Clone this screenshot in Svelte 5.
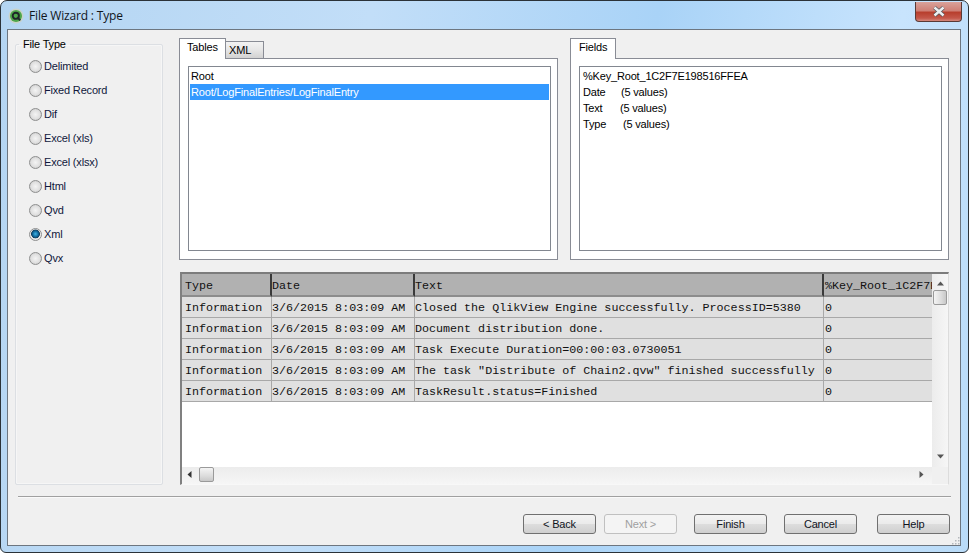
<script>
  const types = ['Delimited','Fixed Record','Dif','Excel (xls)','Excel (xlsx)','Html','Qvd','Xml','Qvx'];
  const rows = [
    'Closed the QlikView Engine successfully. ProcessID=5380',
    'Document distribution done.',
    'Task Execute Duration=00:00:03.0730051',
    'The task "Distribute of Chain2.qvw" finished successfully',
    'TaskResult.status=Finished'
  ];
  const buttons = [
    { label: '< Back', cls: '' },
    { label: 'Next >', cls: 'off' },
    { label: 'Finish', cls: 'g1' },
    { label: 'Cancel', cls: 'g2' },
    { label: 'Help', cls: 'g3' }
  ];
</script>

<div class="window">
  <header class="titlebar">
    <svg class="logo" width="16" height="16" viewBox="0 0 16 16">
      <circle cx="8" cy="8" r="7.5" fill="#c9d2c9"/>
      <circle cx="8" cy="8" r="6" fill="#4fa64a"/>
      <circle cx="7.8" cy="7.8" r="3.1" fill="none" stroke="#20262a" stroke-width="1.9"/>
      <path d="M9.5 9.5 L12.3 12.3" stroke="#20262a" stroke-width="1.9"/>
    </svg>
    <span class="title">File Wizard : Type</span>
    <button class="close" aria-label="Close">
      <svg width="14" height="11" viewBox="0 0 14 11">
        <path d="M2.5 1.5 L11.5 9.5 M11.5 1.5 L2.5 9.5" stroke="#50565c" stroke-width="3.8"/>
        <path d="M2.5 1.5 L11.5 9.5 M11.5 1.5 L2.5 9.5" stroke="#eceff1" stroke-width="2.4"/>
      </svg>
    </button>
  </header>

  <div class="client">
    <div class="main">
      <fieldset class="group">
        <legend>File Type</legend>
        {#each types as t}
          <label class="radio">
            <span class="dot" class:on={t === 'Xml'}></span>
            <span>{t}</span>
          </label>
        {/each}
      </fieldset>

      <div class="right">
        <div class="panes">
          <section class="pane">
            <div class="tabs">
              <span class="tab active">Tables</span>
              <span class="tab back">XML</span>
            </div>
            <div class="tabpanel">
              <div class="list">
                <div class="item">Root</div>
                <div class="item sel">Root/LogFinalEntries/LogFinalEntry</div>
              </div>
            </div>
          </section>
          <section class="pane">
            <div class="tabs">
              <span class="tab active fields">Fields</span>
            </div>
            <div class="tabpanel">
              <div class="list fieldlist">
                <div class="item">%Key_Root_1C2F7E198516FFEA</div>
                <div class="item"><span class="fname date">Date</span>(5 values)</div>
                <div class="item"><span class="fname">Text</span>(5 values)</div>
                <div class="item"><span class="fname wide">Type</span>(5 values)</div>
              </div>
            </div>
          </section>
        </div>

        <div class="grid">
          <div class="data">
            <div class="row head">
              <div class="cell">Type</div>
              <div class="cell">Date</div>
              <div class="cell">Text</div>
              <div class="cell">%Key_Root_1C2F7E198516FFEA</div>
            </div>
            {#each rows as r}
              <div class="row">
                <div class="cell">Information</div>
                <div class="cell">3/6/2015 8:03:09 AM</div>
                <div class="cell">{r}</div>
                <div class="cell">0</div>
              </div>
            {/each}
          </div>
          <div class="vbar">
            <svg class="arrow" width="9" height="5" viewBox="0 0 9 5"><path d="M4.5 0.5 L8 4.5 H1 Z" fill="#555"/></svg>
            <div class="vthumb"></div>
            <svg class="arrow down" width="9" height="5" viewBox="0 0 9 5"><path d="M4.5 4.5 L8 0.5 H1 Z" fill="#555"/></svg>
          </div>
          <div class="hbar">
            <svg class="harrow" width="5" height="9" viewBox="0 0 5 9"><path d="M0.5 4.5 L4.5 1 V8 Z" fill="#333"/></svg>
            <div class="hthumb"></div>
            <svg class="harrow end" width="5" height="9" viewBox="0 0 5 9"><path d="M4.5 4.5 L0.5 1 V8 Z" fill="#555"/></svg>
          </div>
          <div class="corner"></div>
        </div>
      </div>
    </div>

    <footer class="footer">
      <hr class="sep" />
      <div class="buttons">
        {#each buttons as b}
          <button class="btn {b.cls}">{b.label}</button>
        {/each}
      </div>
    </footer>
    <svg class="grip" width="8" height="8" viewBox="0 0 8 8">
      <path d="M6 0h1.5v1.5H6zM3 3h1.5v1.5H3zM6 3h1.5v1.5H6zM0 6h1.5v1.5H0zM3 6h1.5v1.5H3zM6 6h1.5v1.5H6z" fill="#b4b8bc"/>
    </svg>
  </div>
</div>

<style>
  :global(body) { margin: 0; background: #fff; }
  * { box-sizing: border-box; }

  .window {
    width: 969px;
    height: 553px;
    display: flex;
    flex-direction: column;
    padding: 0 7px 7px 6px;
    border: 1px solid #2b3238;
    border-radius: 7px 7px 6px 6px;
    background: linear-gradient(100deg, #b4d5f2 0%, #c2def8 35%, #a9d3f7 62%, #c8e4fd 85%, #b9dbf8 100%);
    font: 11px/16px "Liberation Sans", Arial, sans-serif;
    letter-spacing: -0.18px;
    color: #000;
    overflow: hidden;
  }

  .titlebar {
    flex: none;
    height: 28px;
    display: flex;
    align-items: center;
    gap: 5px;
    padding-left: 1px;
    padding-top: 1px;
  }
  .title { font: 12px "Open Sans", sans-serif; letter-spacing: -0.17px; color: #10161c; }
  .close {
    margin-left: auto;
    margin-right: -1px;
    align-self: flex-start;
    width: 47px;
    height: 20px;
    padding: 0;
    display: flex;
    align-items: center;
    justify-content: center;
    border: 1px solid #5a3a36;
    border-top: none;
    border-radius: 0 0 4px 4px;
    background: linear-gradient(#d9a29a 0%, #cf8076 45%, #b83f2e 55%, #c4574a 85%, #d58a7e 100%);
  }

  .client {
    position: relative;
    flex: 1;
    display: flex;
    flex-direction: column;
    border: 1px solid #6d7680;
    background: #f0f0f0;
    padding: 8px 11px 11px 7px;
  }

  .main { flex: none; display: flex; gap: 16px; height: 447px; }

  .group {
    flex: none;
    width: 148px;
    height: 447px;
    margin: 0;
    padding: 0 0 0 13px;
    border: 1px solid #dcdfe3;
    border-radius: 2px;
    box-shadow: inset 0 0 0 1px #f6f6f6;
  }
  legend {
    margin-left: -10px;
    padding: 0 4px;
    line-height: 12px;
  }
  .radio {
    display: flex;
    align-items: center;
    gap: 1px;
    height: 24px;
    color: #10183c;
  }
  .radio:first-of-type { margin-top: 4px; }
  .dot {
    width: 13px;
    height: 13px;
    border-radius: 50%;
    border: 1px solid #8e8f8f;
    background: radial-gradient(circle at 50% 50%, #f4f4f4 0%, #e0e0e0 55%, #d0d0d0 75%, #f2f2f2 100%);
    margin-right: 1px;
  }
  .dot.on {
    background: radial-gradient(circle at 50% 45%, #3fb4e6 0%, #0b5f92 38%, #17405c 50%, #e8e8e8 58%, #f4f4f4 100%);
  }

  .right { flex: none; width: 770px; display: flex; flex-direction: column; gap: 12px; }
  .panes { display: flex; gap: 12px; height: 222px; }
  .pane { width: 379px; display: flex; flex-direction: column; }

  .tabs { flex: none; height: 20px; display: flex; align-items: flex-end; position: relative; z-index: 1; }
  .tab {
    border: 1px solid #898c95;
    padding-left: 7px;
    line-height: 16px;
  }
  .tab.active {
    width: 47px;
    height: 21px;
    margin-bottom: -1px;
    background: #fff;
    border-bottom: none;
  }
  .tab.fields { width: 46px; padding-left: 8px; }
  .tab.back {
    width: 38px;
    height: 17px;
    padding-left: 3px;
    border-left: none;
    border-bottom: none;
    background: linear-gradient(#f2f2f2, #e6e6e6 50%, #d2d2d2);
    line-height: 17px;
  }

  .tabpanel {
    flex: 1;
    background: #fff;
    border: 1px solid #898c95;
    padding: 7px 6px 8px 8px;
  }
  .list {
    height: 100%;
    border: 1px solid #828790;
    background: #fff;
    padding: 1px;
  }
  .item { height: 16px; padding-left: 1px; }
  .item.sel { background: #3399ff; color: #fff; }
  .fieldlist .item { padding-left: 2px; }
  .fname { display: inline-block; width: 37px; }
  .fname.date { width: 38px; }
  .fname.wide { width: 40px; }

  .grid {
    height: 213px;
    margin-left: 1px;
    display: grid;
    grid-template-columns: 1fr 16px;
    grid-template-rows: 1fr 17px;
    border-top: 2px solid #7c7c7c;
    border-left: 2px solid #808080;
    border-bottom: 1px solid #f8f8f8;
    border-right: 1px solid #dcdcdc;
    background: #fff;
  }
  .data {
    overflow: hidden;
    min-width: 0;
    font: 11.7px/20px "Liberation Mono", "Courier New", monospace;
    letter-spacing: 0;
  }
  .row {
    display: grid;
    grid-template-columns: 90px 143px 409px 110px;
    height: 21px;
    background: #e0e0e0;
    color: #111;
  }
  .cell {
    border-right: 1px solid #a8a8a8;
    border-bottom: 1px solid #a8a8a8;
    white-space: nowrap;
    overflow: hidden;
    line-height: 23px;
  }
  .cell:first-child { padding-left: 3px; }
  .cell:last-child { border-right: none; padding-left: 1px; }
  .head { height: 23px; background: #b1b1b1; }
  .head .cell {
    line-height: 24px;
    border-right: 2px solid #3a3a3a;
    border-bottom: 2px solid #8c8c8c;
  }
  .head .cell:last-child { border-right: none; }

  .vbar {
    display: flex;
    flex-direction: column;
    align-items: center;
    background: linear-gradient(90deg, #ececec, #f6f6f6);
  }
  .arrow { margin-top: 7px; flex: none; }
  .arrow.down { margin-top: auto; margin-bottom: 8px; }
  .vthumb {
    width: 14px;
    height: 15px;
    margin-top: 4px;
    border: 1px solid #9a9a9a;
    border-radius: 2px;
    background: linear-gradient(90deg, #f4f4f4, #dcdcdc 60%, #c8c8c8);
  }
  .hbar {
    display: flex;
    align-items: flex-start;
    padding-left: 5px;
    padding-right: 8px;
    background: linear-gradient(#ececec, #f6f6f6);
  }
  .harrow { margin-top: 3px; flex: none; }
  .harrow.end { margin-left: auto; }
  .hthumb {
    width: 15px;
    height: 15px;
    margin-left: 7px;
    border: 1px solid #9a9a9a;
    border-radius: 2px;
    background: linear-gradient(#f4f4f4, #dcdcdc 60%, #c8c8c8);
  }
  .corner { background: #f0f0f0; }

  .footer { flex: none; display: flex; flex-direction: column; }
  .sep {
    margin: 11px -2px 0 3px;
    height: 2px;
    border: none;
    border-top: 1px solid #a0a0a0;
    border-bottom: 1px solid #fafafa;
  }
  .buttons {
    margin: 16px -1px 0 0;
    display: flex;
    justify-content: flex-end;
    gap: 8px;
  }
  .btn {
    width: 73px;
    height: 20px;
    padding: 0;
    font: inherit;
    letter-spacing: inherit;
    color: #10141c;
    border: 1px solid #707070;
    border-radius: 3px;
    background: linear-gradient(#f3f3f3 0%, #ebebeb 48%, #dddddd 52%, #cfcfcf 100%);
  }
  .btn.off { color: #a0a0a0; border-color: #c0c0c0; background: #f4f4f4; }
  .btn.g1 { margin-left: 9px; }
  .btn.g2 { margin-left: 9px; }
  .btn.g3 { margin-left: 12px; }

  .grip { position: absolute; right: 0; bottom: 0; }
</style>
